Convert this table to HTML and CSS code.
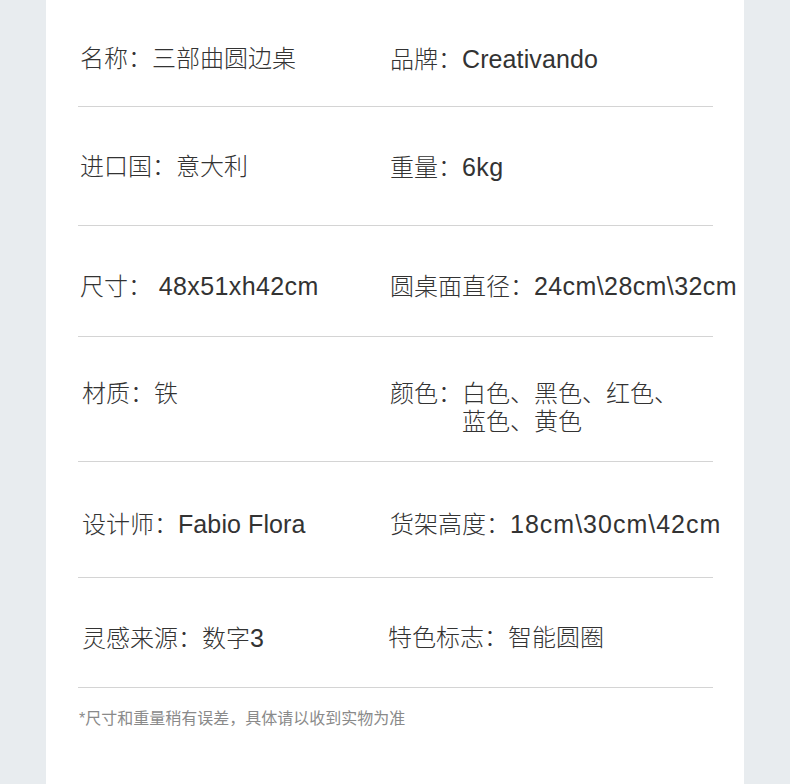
FILE: index.html
```html
<!DOCTYPE html>
<html lang="zh-CN">
<head>
<meta charset="utf-8">
<title>产品参数</title>
<link rel="stylesheet" href="styles.css">
</head>
<body>
<main class="panel">
  <section class="specs">
    <div class="row r1">
      <div class="cell left">名称：三部曲圆边桌</div>
      <div class="cell right">品牌：<span class="en">Creativando</span></div>
    </div>
    <div class="row r2">
      <div class="cell left">进口国：意大利</div>
      <div class="cell right">重量：<span class="num">6kg</span></div>
    </div>
    <div class="row r3">
      <div class="cell left">尺寸：&nbsp;<span class="num">48x51xh42cm</span></div>
      <div class="cell right">圆桌面直径：<span class="num">24cm\28cm\32cm</span></div>
    </div>
    <div class="row r4">
      <div class="cell left shift">材质：铁</div>
      <div class="cell right pair">
        <span class="label">颜色：</span>
        <span class="value">白色、黑色、红色、<br>蓝色、黄色</span>
      </div>
    </div>
    <div class="row r5">
      <div class="cell left shift">设计师：<span class="en">Fabio Flora</span></div>
      <div class="cell right">货架高度：<span class="num wide">18cm\30cm\42cm</span></div>
    </div>
    <div class="row r6">
      <div class="cell left shift">灵感来源：数字<span class="num">3</span></div>
      <div class="cell right back">特色标志：智能圆圈</div>
    </div>
  </section>
  <p class="note">*尺寸和重量稍有误差，具体请以收到实物为准</p>
</main>
</body>
</html>
```

FILE: styles.css
```css
html, body {
  margin: 0;
  padding: 0;
}

body {
  background: #e8ecef;
  font-family: "Liberation Sans", "Noto Sans CJK SC", sans-serif;
  color: #333333;
}

.panel {
  margin-left: 46px;
  width: 698px;
  min-height: 784px;
  background: #ffffff;
  box-sizing: border-box;
  padding: 0 31px 0 32px;
}

.specs {
  display: flex;
  flex-direction: column;
  width: 635px;
}

.row {
  display: grid;
  grid-template-columns: 312px 1fr;
  border-bottom: 1px solid #d4d4d4;
  box-sizing: border-box;
  font-size: 24px;
  line-height: 28px;
  font-weight: 300;
}

.cell {
  white-space: nowrap;
}

.en {
  font-size: 25px;
  letter-spacing: 0.1px;
}

.num {
  font-size: 25px;
  letter-spacing: 0.4px;
}

.num.wide {
  letter-spacing: 1px;
}

.left {
  padding-left: 2px;
}

.left.shift {
  padding-left: 4px;
}

.right.back {
  margin-left: -2px;
}

.pair {
  display: flex;
}

.r1 { height: 107px; padding-top: 45px; }
.r2 { height: 119px; padding-top: 46px; }
.r3 { height: 111px; padding-top: 46px; }
.r4 { height: 125px; padding-top: 43px; }
.r5 { height: 116px; padding-top: 48px; }
.r6 { height: 110px; padding-top: 46px; }

.note {
  margin: 0;
  padding: 21px 0 0 1px;
  font-size: 16px;
  line-height: 20px;
  color: #8a8a8a;
}
```
